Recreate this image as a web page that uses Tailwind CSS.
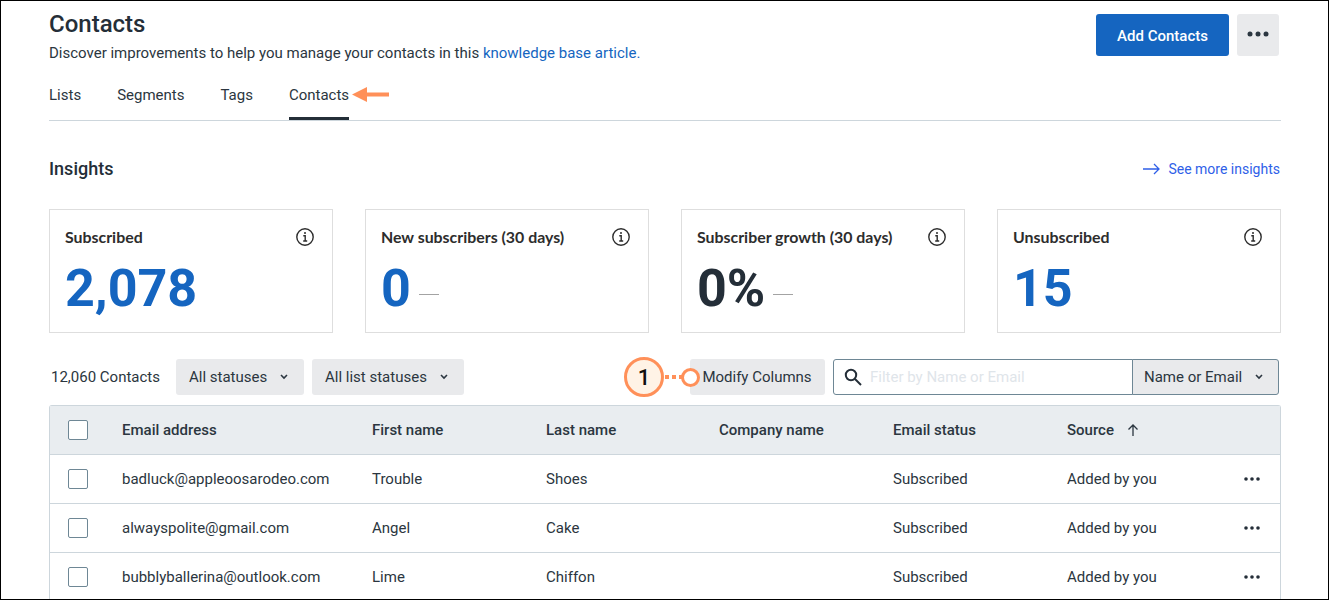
<!DOCTYPE html>
<html>
  <head>
    <meta charset="UTF-8" />
    <meta name="viewport" content="width=device-width, initial-scale=1.0" />
    <script src="https://cdn.jsdelivr.net/npm/@tailwindcss/browser@4"></script>
  </head>

  <body class="h-[600px] overflow-hidden bg-white font-['Roboto',sans-serif] text-[#2b3640]">
    <div class="relative h-[600px] overflow-hidden border border-black pl-[48px] pr-[47px]">
      <!-- header -->
      <div class="flex justify-between">
        <div>
          <h1 class="pt-[8px] text-[24px] leading-[30px] font-medium text-[#242e38]">Contacts</h1>
          <p class="mt-[4px] text-[15px] leading-[20px]">
            Discover improvements to help you manage your contacts in this
            <a class="text-[#1565c0]">knowledge base article.</a>
          </p>
        </div>
        <div class="flex items-start gap-[8px] pt-[13px] pr-[2px]">
          <button class="h-[42px] w-[133px] rounded-[3px] bg-[#1565c0] pt-[2px] text-[15px] font-medium text-white">Add Contacts</button>
          <button class="flex h-[42px] w-[42px] items-center justify-center rounded-[3px] bg-[#e9eaec] pb-[2px]">
            <svg width="22" height="6" viewBox="0 0 22 6" fill="#2b3640"><circle cx="3" cy="3" r="2.5" /><circle cx="11" cy="3" r="2.5" /><circle cx="19" cy="3" r="2.5" /></svg>
          </button>
        </div>
      </div>

      <!-- tabs -->
      <div class="mt-[13px] flex h-[45px] gap-[36px] border-b border-[#cdd6dc] text-[15px]">
        <a class="pt-[8px]">Lists</a>
        <a class="pt-[8px]">Segments</a>
        <a class="pt-[8px]">Tags</a>
        <a class="h-[44px] border-b-[3px] border-[#242e38] pt-[8px]">Contacts</a>
      </div>

      <!-- insights -->
      <div class="mt-[36px] flex items-center justify-between pr-[1px]">
        <h2 class="text-[18px] leading-[24px] font-medium text-[#242e38]">Insights</h2>
        <a class="flex items-center gap-[8px] text-[14px] text-[#2f5fe8]">
          <svg width="17" height="12" viewBox="0 0 17 12" fill="none" stroke="#2f5fe8" stroke-width="1.3"><path d="M0 6h16M11 1l5 5-5 5" /></svg>
          See more insights
        </a>
      </div>

      <div class="mt-[28px] grid grid-cols-4 gap-[32px]">
        <div class="h-[124px] border border-[#dedede] px-[15px] pt-[17px]">
          <div class="flex items-center justify-between font-['Lato',sans-serif] text-[15.9px] leading-[20px] font-bold text-[#2d2d2d]">
            Subscribed
            <svg class="mr-[3px]" width="18" height="18" viewBox="0 0 18 18" fill="none" stroke="#2d2d2d" stroke-width="1.4"><circle cx="9" cy="9" r="8.200" /><path d="M7.3 7.8H9.2V13M7.2 13h4" /><circle cx="9" cy="5" r="1" fill="#2d2d2d" stroke="none" /></svg>
          </div>
          <div class="mt-[12px] flex items-center text-[52px] leading-[60px] font-bold text-[#1565c0]">2,078</div>
        </div>
        <div class="h-[124px] border border-[#dedede] px-[15px] pt-[17px]">
          <div class="flex items-center justify-between font-['Lato',sans-serif] text-[15.9px] leading-[20px] font-bold text-[#2d2d2d]">
            New subscribers (30 days)
            <svg class="mr-[3px]" width="18" height="18" viewBox="0 0 18 18" fill="none" stroke="#2d2d2d" stroke-width="1.4"><circle cx="9" cy="9" r="8.200" /><path d="M7.3 7.8H9.2V13M7.2 13h4" /><circle cx="9" cy="5" r="1" fill="#2d2d2d" stroke="none" /></svg>
          </div>
          <div class="mt-[12px] flex items-center gap-[8px] text-[52px] leading-[60px] font-bold text-[#1565c0]">0<span class="mt-[10px] h-[1px] w-[20px] bg-[#a3a3a3]"></span></div>
        </div>
        <div class="h-[124px] border border-[#dedede] px-[15px] pt-[17px]">
          <div class="flex items-center justify-between font-['Lato',sans-serif] text-[15.9px] leading-[20px] font-bold text-[#2d2d2d]">
            Subscriber growth (30 days)
            <svg class="mr-[3px]" width="18" height="18" viewBox="0 0 18 18" fill="none" stroke="#2d2d2d" stroke-width="1.4"><circle cx="9" cy="9" r="8.200" /><path d="M7.3 7.8H9.2V13M7.2 13h4" /><circle cx="9" cy="5" r="1" fill="#2d2d2d" stroke="none" /></svg>
          </div>
          <div class="mt-[12px] flex items-center gap-[8px] text-[52px] leading-[60px] font-bold text-[#242e38]">0%<span class="mt-[10px] h-[1px] w-[20px] bg-[#a3a3a3]"></span></div>
        </div>
        <div class="h-[124px] border border-[#dedede] px-[15px] pt-[17px]">
          <div class="flex items-center justify-between font-['Lato',sans-serif] text-[15.9px] leading-[20px] font-bold text-[#2d2d2d]">
            Unsubscribed
            <svg class="mr-[3px]" width="18" height="18" viewBox="0 0 18 18" fill="none" stroke="#2d2d2d" stroke-width="1.4"><circle cx="9" cy="9" r="8.200" /><path d="M7.3 7.8H9.2V13M7.2 13h4" /><circle cx="9" cy="5" r="1" fill="#2d2d2d" stroke="none" /></svg>
          </div>
          <div class="mt-[12px] flex items-center text-[52px] leading-[60px] font-bold text-[#1565c0]">15</div>
        </div>
      </div>

      <!-- toolbar -->
      <div class="mt-[26px] flex h-[36px] items-center pr-[2px] text-[15px]">
        <span class="ml-[2px] w-[125px]">12,060 Contacts</span>
        <button class="flex h-[36px] w-[128px] items-center gap-[12px] rounded-[3px] bg-[#e9eaec] pl-[13px]">All statuses
          <svg width="10" height="6" viewBox="0 0 10 6" fill="none" stroke="#2b3640" stroke-width="1.6"><path d="M2 1l3 3 3-3" /></svg>
        </button>
        <button class="ml-[8px] flex h-[36px] w-[152px] items-center gap-[12px] rounded-[3px] bg-[#e9eaec] pl-[13px]">All list statuses
          <svg width="10" height="6" viewBox="0 0 10 6" fill="none" stroke="#2b3640" stroke-width="1.6"><path d="M2 1l3 3 3-3" /></svg>
        </button>
        <button class="ml-auto h-[36px] w-[135px] rounded-[3px] bg-[#e9eaec] pr-[1px]">Modify Columns</button>
        <div class="ml-[8px] flex h-[36px] w-[300px] items-center gap-[8px] rounded-l-[3px] border border-[#6e8795] pl-[10px] text-[#dfe5ea]">
          <svg width="18" height="18" viewBox="0 0 18 18" fill="none" stroke="#242e38" stroke-width="2"><circle cx="7" cy="7" r="5.2" /><path d="M11 11l6 6" /></svg>
          Filter by Name or Email
        </div>
        <button class="-ml-[1px] flex h-[36px] w-[147px] items-center gap-[12px] rounded-r-[3px] border border-[#6e8795] bg-[#e9eaec] pl-[11px]">Name or Email
          <svg width="10" height="6" viewBox="0 0 10 6" fill="none" stroke="#2b3640" stroke-width="1.6"><path d="M2 1l3 3 3-3" /></svg>
        </button>
      </div>

      <!-- table -->
      <div class="mt-[10px] rounded-t-[3px] border-l border-r border-t border-[#cdd6dc] text-[15px]">
        <div class="grid h-[49px] grid-cols-[72px_250px_174px_173px_174px_174px_1fr] items-center border-b border-[#cdd6dc] bg-[#e9edf0] font-medium">
          <span class="ml-[18px] h-[20px] w-[20px] rounded-[2px] border border-[#6e8795] bg-white"></span>
          <span>Email address</span>
          <span>First name</span>
          <span>Last name</span>
          <span>Company name</span>
          <span>Email status</span>
          <span class="flex items-center gap-[13px]">Source
            <svg width="12" height="12" viewBox="0 0 12 12" fill="none" stroke="#2b3640" stroke-width="1.3"><path d="M6 12V1M1.5 5.5L6 1l4.5 4.5" /></svg>
          </span>
        </div>
        <div class="grid h-[49px] grid-cols-[72px_250px_174px_173px_174px_174px_1fr] items-center border-b border-[#cdd6dc]">
          <span class="ml-[18px] h-[20px] w-[20px] rounded-[2px] border border-[#6e8795]"></span>
          <span>badluck@appleoosarodeo.com</span>
          <span>Trouble</span>
          <span>Shoes</span>
          <span></span>
          <span>Subscribed</span>
          <span class="flex items-center justify-between pr-[20px]">Added by you
            <svg width="16" height="4" viewBox="0 0 16 4" fill="#242e38"><circle cx="2" cy="2" r="1.8" /><circle cx="8" cy="2" r="1.8" /><circle cx="14" cy="2" r="1.8" /></svg>
          </span>
        </div>
        <div class="grid h-[49px] grid-cols-[72px_250px_174px_173px_174px_174px_1fr] items-center border-b border-[#cdd6dc]">
          <span class="ml-[18px] h-[20px] w-[20px] rounded-[2px] border border-[#6e8795]"></span>
          <span>alwayspolite@gmail.com</span>
          <span>Angel</span>
          <span>Cake</span>
          <span></span>
          <span>Subscribed</span>
          <span class="flex items-center justify-between pr-[20px]">Added by you
            <svg width="16" height="4" viewBox="0 0 16 4" fill="#242e38"><circle cx="2" cy="2" r="1.8" /><circle cx="8" cy="2" r="1.8" /><circle cx="14" cy="2" r="1.8" /></svg>
          </span>
        </div>
        <div class="grid h-[49px] grid-cols-[72px_250px_174px_173px_174px_174px_1fr] items-center border-b border-[#cdd6dc]">
          <span class="ml-[18px] h-[20px] w-[20px] rounded-[2px] border border-[#6e8795]"></span>
          <span>bubblyballerina@outlook.com</span>
          <span>Lime</span>
          <span>Chiffon</span>
          <span></span>
          <span>Subscribed</span>
          <span class="flex items-center justify-between pr-[20px]">Added by you
            <svg width="16" height="4" viewBox="0 0 16 4" fill="#242e38"><circle cx="2" cy="2" r="1.8" /><circle cx="8" cy="2" r="1.8" /><circle cx="14" cy="2" r="1.8" /></svg>
          </span>
        </div>
      </div>

      <!-- annotations over the screenshot -->
      <svg class="absolute top-[86px] left-[351px]" width="37" height="15" viewBox="0 0 37 15" fill="#ff9059"><path d="M0 7.500L15 0V5.500H37V9.500H15V15z" /></svg>
      <div class="absolute top-[356px] left-[623px] flex h-[40px] w-[40px] items-center justify-center rounded-full border-[3px] border-[#ff9059] bg-[#fff3e6] text-[22px] font-medium text-[#111]">1</div>
      <div class="absolute top-[374px] left-[664px] flex gap-[3px]">
        <span class="h-[4px] w-[4px] bg-[#ff9059]"></span>
        <span class="h-[4px] w-[4px] bg-[#ff9059]"></span>
        <span class="h-[4px] w-[4px] bg-[#ff9059]"></span>
      </div>
      <div class="absolute top-[367px] left-[680px] h-[19px] w-[19px] rounded-full border-[3px] border-[#ff9059] bg-white"></div>
    </div>
  </body>
</html>
